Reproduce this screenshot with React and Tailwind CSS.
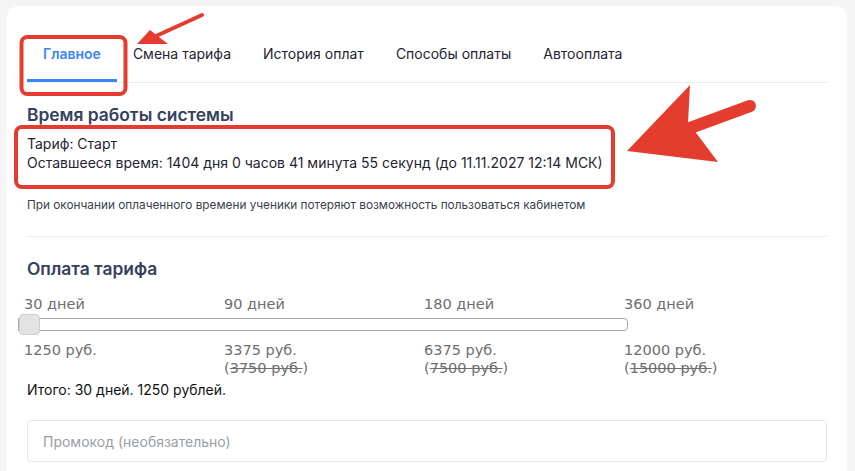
import React from "react";

const tabs = ["Главное", "Смена тарифа", "История оплат", "Способы оплаты", "Автооплата"];

const plans = [
  { days: "30 дней", price: "1250 руб.", old: null },
  { days: "90 дней", price: "3375 руб.", old: "3750 руб." },
  { days: "180 дней", price: "6375 руб.", old: "7500 руб." },
  { days: "360 дней", price: "12000 руб.", old: "15000 руб." },
];

// red markup drawn over the screenshot
const Annotations = () => (
  <svg className="absolute inset-0 pointer-events-none" width="855" height="471" viewBox="0 0 855 471">
    <rect x="21.5" y="37" width="104" height="57" rx="6" fill="none" stroke="#e43d30" strokeWidth="4" />
    <line x1="202" y1="15" x2="156" y2="36" stroke="#e43d30" strokeWidth="4" strokeLinecap="round" />
    <polygon points="137,44 150,30 168,44" fill="#e43d30" />
    <rect x="16" y="127" width="597" height="60" rx="6" fill="none" stroke="#e43d30" strokeWidth="4" />
    <line x1="750" y1="106" x2="690" y2="128" stroke="#e43d30" strokeWidth="12" strokeLinecap="round" />
    <polygon points="627,151 690,85 688,123 697,134 718,162" fill="#e43d30" />
  </svg>
);

export default function App() {
  return (
    <div
      className="relative w-full h-[471px] overflow-hidden bg-[#f5f5f6] pt-[6px] pl-[7px] pr-[8px]"
      style={{ fontFamily: "Inter, 'Noto Sans', sans-serif" }}
    >
      <div className="bg-white rounded-t-[12px] h-[520px] px-[20px] pt-[20px]">
        {/* tabs */}
        <div className="flex border-b border-[#ebebeb]">
          {tabs.map((t, i) => (
            <div
              key={t}
              className={
                i === 0
                  ? "h-[56px] px-4 pt-[1px] flex items-center border-b-[3px] border-[#3a86f7] text-[#3a86f7] font-semibold text-[14px]"
                  : "h-[56px] px-4 pt-[1px] pb-[3px] flex items-center text-[#1f2433] text-[14px]"
              }
            >
              {t}
            </div>
          ))}
        </div>

        <h2 className="mt-[19px] text-[17.4px] leading-[26px] font-semibold text-[#34405e]">Время работы системы</h2>
        <div className="mt-[6px] text-[14px] leading-[19px] text-[#1f2433]">
          <div>Тариф: Старт</div>
          <div>Оставшееся время: 1404 дня 0 часов 41 минута 55 секунд (до 11.11.2027 12:14 МСК)</div>
        </div>
        <p className="mt-[25px] text-[11.8px] leading-[16px] text-[#3a3f4b]">
          При окончании оплаченного времени ученики потеряют возможность пользоваться кабинетом
        </p>

        <div className="mt-[23px] border-t border-[#ebebeb]" />

        <h2 className="mt-[20px] text-[17.4px] leading-[24px] font-semibold text-[#34405e]">Оплата тарифа</h2>

        {/* period slider */}
        <div className="ml-[-3px] mt-[14px] text-[14.5px] leading-[18px] text-[#6e6e6e]" style={{ fontFamily: "Verdana, 'DejaVu Sans', sans-serif" }}>
          <div className="grid grid-cols-[200px_200px_200px_200px]">
            {plans.map((p) => (
              <div key={p.days}>{p.days}</div>
            ))}
          </div>
          <div className="relative ml-[-6px] mt-[5px] w-[610px] h-[13px] border border-[#a9a9a9] rounded-r-[4px] bg-white">
            <div className="absolute left-0 top-[-5px] w-[21px] h-[21px] rounded-[4px] bg-[#e3e3e3] border border-[#cfcfcf]" />
          </div>
          <div className="mt-[10px] grid grid-cols-[200px_200px_200px_200px]">
            {plans.map((p) => (
              <div key={p.price}>
                <div>{p.price}</div>
                {p.old && (
                  <div>
                    (<span className="line-through">{p.old}</span>)
                  </div>
                )}
              </div>
            ))}
          </div>
        </div>

        <div className="mt-[3px] text-[14px] leading-[19px] text-[#111]">Итого: 30 дней. 1250 рублей.</div>

        <div className="mt-[21px] h-[42px] border border-[#e6e7ea] rounded-[4px] flex items-center px-[15px] text-[14px] text-[#9a9ea6]">
          Промокод (необязательно)
        </div>
      </div>
      <Annotations />
    </div>
  );
}
